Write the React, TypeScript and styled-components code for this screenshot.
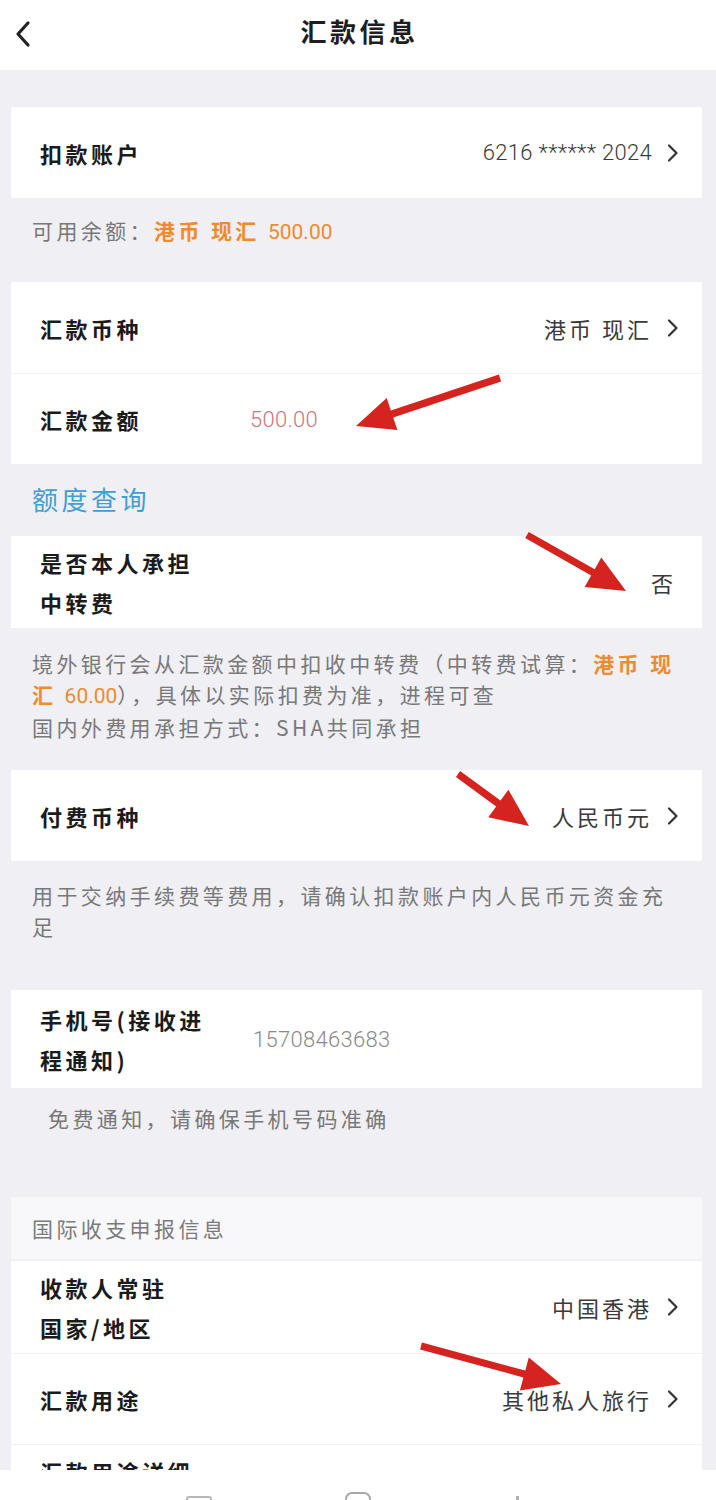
import { FunctionComponent, ReactNode } from "react"
import styled, { createGlobalStyle } from "styled-components"

const GlobalStyle = createGlobalStyle`
  html, body {
    margin: 0;
    padding: 0;
    background: #efeff4;
  }
  body {
    font-family: "Noto Sans CJK SC", "Noto Sans", sans-serif;
    -webkit-font-smoothing: antialiased;
  }
`

// red annotation arrows drawn over the screenshot
type Arrow = { x1: number; y1: number; x2: number; y2: number }

const arrows: Arrow[] = [
  { x1: 500, y1: 378, x2: 356, y2: 426 },
  { x1: 527, y1: 535, x2: 626, y2: 591 },
  { x1: 458, y1: 774, x2: 529, y2: 826 },
  { x1: 421, y1: 1346, x2: 561, y2: 1384 },
]

const arrowPoints = ({ x1, y1, x2, y2 }: Arrow) => {
  const head = 38
  const half = 17
  const shaft = 3.6
  const len = Math.hypot(x2 - x1, y2 - y1)
  const ux = (x2 - x1) / len
  const uy = (y2 - y1) / len
  const px = -uy
  const py = ux
  const bx = x2 - ux * head
  const by = y2 - uy * head
  const pts = [
    [x1 + px * shaft, y1 + py * shaft],
    [bx + px * shaft, by + py * shaft],
    [bx + px * half, by + py * half],
    [x2, y2],
    [bx - px * half, by - py * half],
    [bx - px * shaft, by - py * shaft],
    [x1 - px * shaft, y1 - py * shaft],
  ]
  return pts.map((p) => p.map((v) => v.toFixed(1)).join(",")).join(" ")
}

const Chevron: FunctionComponent = () => (
  <ChevronIcon viewBox="0 0 12 20" width="12" height="20">
    <path d="M2 2.5 L9.5 10 L2 17.5" fill="none" stroke="#333" strokeWidth="2.2" strokeLinecap="round" strokeLinejoin="round" />
  </ChevronIcon>
)

const Field: FunctionComponent<{
  label: ReactNode
  value?: ReactNode
  arrow?: boolean
  inline?: boolean
  tone?: "default" | "amount" | "muted"
  pad?: number
  labelWidth?: number
}> = ({ label, value, arrow, inline, tone = "default", pad = 0, labelWidth = 210 }) => (
  <Row $pad={pad}>
    <Label $width={inline ? labelWidth : undefined}>{label}</Label>
    {value !== undefined && (
      <Value $inline={inline} $tone={tone}>
        {value}
        {arrow && <Chevron />}
      </Value>
    )}
  </Row>
)

const App: FunctionComponent = () => {
  return (
    <>
      <GlobalStyle />
      <Page>
        <Header>
          <BackButton>
            <svg viewBox="0 0 20 28" width="20" height="28">
              <path d="M15 3 L5 14 L15 25" fill="none" stroke="#222" strokeWidth="3.2" strokeLinecap="round" strokeLinejoin="round" />
            </svg>
          </BackButton>
          <Title>汇款信息</Title>
          <span />
        </Header>

        <Content>
          <Card>
            <Field
              label="扣款账户"
              value={<Num>6216 ****** 2024</Num>}
              arrow
            />
          </Card>
          <Note $top={17} $bottom={34}>
            可用余额：<Hl>港币 现汇 <HlNum>500.00</HlNum></Hl>
          </Note>

          <Card>
            <Field label="汇款币种" value="港币 现汇" arrow />
            <Field label="汇款金额" value={<Num>500.00</Num>} inline tone="amount" />
          </Card>
          <QuotaLink>额度查询</QuotaLink>

          <Card>
            <Field
              label={
                <>
                  是否本人承担
                  <br />
                  中转费
                </>
              }
              value="否"
              pad={6}
            />
          </Card>
          <Note $top={20} $bottom={27}>
            境外银行会从汇款金额中扣收中转费（中转费试算：<Hl>港币 现</Hl>
            <br />
            <Hl>
              汇 <HlNum>60.00</HlNum>
            </Hl>
            ），具体以实际扣费为准，进程可查
            <br />
            国内外费用承担方式：SHA共同承担
          </Note>

          <Card>
            <Field label="付费币种" value="人民币元" arrow />
          </Card>
          <Note $top={19} $bottom={48}>
            用于交纳手续费等费用，请确认扣款账户内人民币元资金充
            <br />足
          </Note>

          <Card>
            <Field
              label={
                <>
                  手机号(接收进
                  <br />
                  程通知)
                </>
              }
              value={<Num>15708463683</Num>}
              inline
              labelWidth={213}
              tone="muted"
              pad={9}
            />
          </Card>
          <Note $top={15} $bottom={63} $indent={48}>
            免费通知，请确保手机号码准确
          </Note>

          <Card>
            <SectionTitle>国际收支申报信息</SectionTitle>
            <Field
              label={
                <>
                  收款人常驻
                  <br />
                  国家/地区
                </>
              }
              value="中国香港"
              arrow
              pad={6}
            />
            <Field label="汇款用途" value="其他私人旅行" arrow />
            <Field
              label={
                <>
                  汇款用途详细
                  <br />
                  信息
                </>
              }
              pad={6}
            />
          </Card>
        </Content>

        <NavBar>
          <NavSquare />
          <NavHome />
          <NavBack />
        </NavBar>

        <Annotations viewBox="0 0 716 1500" width="716" height="1500">
          {arrows.map((a, i) => (
            <polygon key={i} points={arrowPoints(a)} fill="#d5231f" />
          ))}
        </Annotations>
      </Page>
    </>
  )
}

const Page = styled.div`
  position: relative;
  width: 716px;
  height: 1500px;
  overflow: hidden;
  background: #efeff4;
`

const Header = styled.header`
  height: 70px;
  background: #fff;
  display: grid;
  grid-template-columns: 60px 1fr 60px;
  align-items: center;
`

const BackButton = styled.div`
  display: flex;
  align-items: center;
  padding-left: 13px;
  height: 100%;
  padding-bottom: 2px;
`

const Title = styled.h1`
  margin: 0;
  text-align: center;
  font-size: 26px;
  font-weight: 700;
  letter-spacing: 3.5px;
  color: #1e1e1e;
  padding-left: 3px;
  padding-bottom: 10px;
`

const Content = styled.main`
  padding-top: 37px;
  display: flex;
  flex-direction: column;
`

const Card = styled.section`
  background: #fff;
  margin: 0 14px 0 11px;
`

const Row = styled.div<{ $pad: number }>`
  display: flex;
  align-items: center;
  min-height: 91px;
  box-sizing: border-box;
  padding: ${(p) => p.$pad}px 26px ${(p) => p.$pad}px 29px;
  & + & {
    border-top: 1px solid #f1f1f3;
  }
`

const Label = styled.div<{ $width?: number }>`
  flex: none;
  ${(p) => (p.$width ? `width: ${p.$width}px;` : "")}
  font-size: 22px;
  line-height: 40px;
  font-weight: 700;
  letter-spacing: 3.5px;
  color: #1b1b1b;
`

const Value = styled.div<{ $inline?: boolean; $tone: "default" | "amount" | "muted" }>`
  ${(p) => (p.$inline ? "" : "margin-left: auto;")}
  display: flex;
  align-items: center;
  gap: 15px;
  font-size: 22px;
  letter-spacing: 3px;
  color: ${(p) => (p.$tone === "amount" ? "#d0737c" : p.$tone === "muted" ? "#8a8a8a" : "#3a3a3a")};
`

const Num = styled.span`
  font-family: "Roboto", "Noto Sans CJK SC", sans-serif;
  font-weight: 300;
  font-size: 22px;
  letter-spacing: 0.3px;
`

const ChevronIcon = styled.svg`
  flex: none;
  margin-right: -3px;
`

const Note = styled.p<{ $top: number; $bottom: number; $indent?: number }>`
  margin: 0;
  padding: ${(p) => p.$top}px 20px ${(p) => p.$bottom}px ${(p) => p.$indent ?? 32}px;
  font-size: 21px;
  line-height: 31px;
  letter-spacing: 3.4px;
  color: #787878;
  white-space: nowrap;
`

const Hl = styled.span`
  color: #f08a2e;
  font-weight: 700;
`

const HlNum = styled.span`
  font-family: "Roboto", "Noto Sans CJK SC", sans-serif;
  font-weight: 400;
  letter-spacing: 0;
`

const QuotaLink = styled.a`
  display: block;
  padding: 17px 32px 19px;
  font-size: 26px;
  line-height: 36px;
  letter-spacing: 3.5px;
  color: #3f9fd5;
`

const SectionTitle = styled.div`
  height: 62px;
  display: flex;
  align-items: center;
  padding-left: 21px;
  background: #f8f8fa;
  font-size: 21px;
  letter-spacing: 3.4px;
  color: #7a7a7a;
  border-bottom: 2px solid #efeff4;
`

const NavBar = styled.nav`
  position: absolute;
  left: 0;
  right: 0;
  bottom: 0;
  height: 30px;
  background: #fff;
`

const NavSquare = styled.span`
  position: absolute;
  left: 186px;
  top: 26px;
  width: 22px;
  height: 22px;
  border: 2px solid #b8b8b8;
  border-radius: 3px;
`

const NavHome = styled.span`
  position: absolute;
  left: 345px;
  top: 22px;
  width: 22px;
  height: 22px;
  border: 2px solid #a8a8a8;
  border-radius: 7px;
`

const NavBack = styled.span`
  position: absolute;
  left: 516px;
  top: 26px;
  width: 3px;
  height: 10px;
  background: #b0b0b0;
`

const Annotations = styled.svg`
  position: absolute;
  left: 0;
  top: 0;
  pointer-events: none;
`

export default App
